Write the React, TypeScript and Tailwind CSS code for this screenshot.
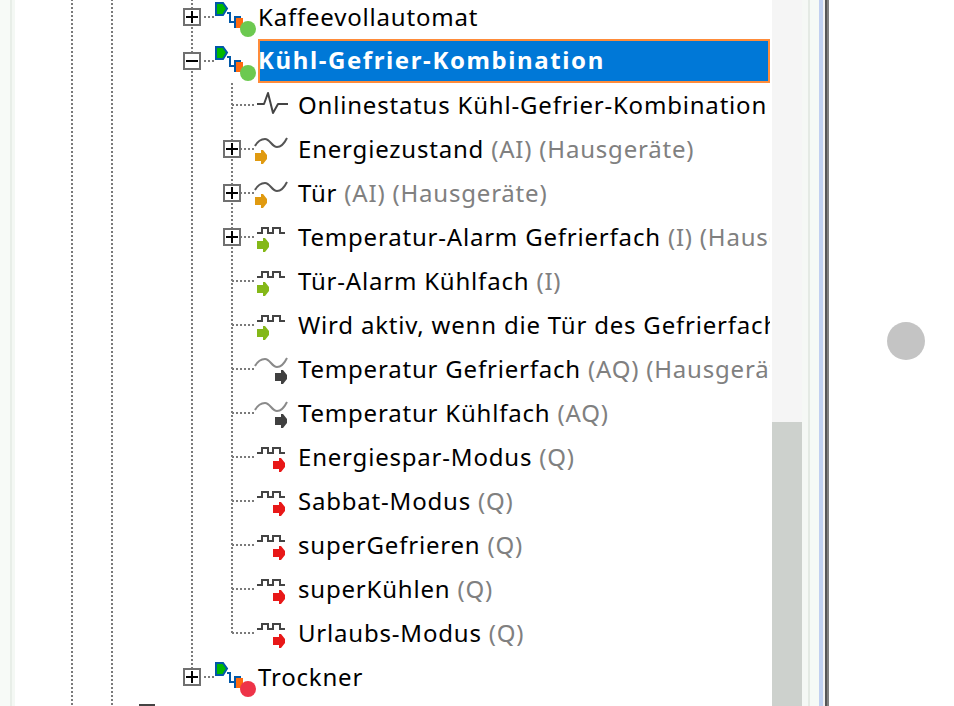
import React from 'react';

const dotsY = 'bg-[repeating-linear-gradient(to_bottom,#7a7a7a_0,#7a7a7a_2px,transparent_2px,transparent_4px)]';
const dotsX = 'bg-[repeating-linear-gradient(to_right,#7a7a7a_0,#7a7a7a_2px,transparent_2px,transparent_4px)]';

type Kind = 'pulse' | 'ai' | 'i' | 'aq' | 'q';

// Vertical guide of one tree level
function Guide({ on = true }: { on?: boolean }) {
  return (
    <div className="w-10 h-full shrink-0 flex justify-center">
      {on && <div className={`w-0.5 h-full ${dotsY}`}></div>}
    </div>
  );
}

function Toggle({ open }: { open?: boolean }) {
  return (
    <div className="absolute left-[11px] top-[13px] w-[18px] h-[18px] border-2 border-[#707070] bg-white flex items-center justify-center">
      <svg width="14" height="14" viewBox="0 0 14 14">
        <rect x="1" y="6" width="12" height="2" fill="#000" />
        {!open && <rect x="6" y="1" width="2" height="12" fill="#000" />}
      </svg>
    </div>
  );
}

function DeviceIcon({ dot }: { dot: string }) {
  return (
    <svg width="46" height="44" viewBox="0 0 46 44" className="shrink-0">
      <path d="M4 8 H11 L15 13.5 L11 20 H4 Z" fill="#00b800" stroke="#0058a8" strokeWidth="2" />
      <path d="M15 18 H18 V27 H22" fill="none" stroke="#0058a8" strokeWidth="2" />
      <rect x="24" y="23" width="7" height="10" fill="#ff6a10" />
      <path d="M23 33 V22 H29" fill="none" stroke="#0058a8" strokeWidth="2" />
      <circle cx="36" cy="34" r="8" fill={dot} />
    </svg>
  );
}

const sine = 'M3 19 Q7 12 13 12 C18 12 20 20 25 20 C30 20 33 15 35 11';
const square = 'M5 18 H10 V13 H16 V18 H21 V13 H28 V18 H33';

function Arrow({ x, y, color }: { x: number; y: number; color: string }) {
  return <path transform={`translate(${x} ${y})`} d="M0 3 H6 V0 H8 L12 5 V9 L8 14 H6 V11 H0 Z" fill={color} />;
}

function SignalIcon({ kind }: { kind: Kind }) {
  return (
    <svg width="46" height="44" viewBox="0 0 46 44" className="shrink-0">
      {kind === 'pulse' && (
        <path d="M5 21 H12 L16 10 L21 30 L26 21 H36" fill="none" stroke="#444" strokeWidth="2" strokeLinejoin="round" />
      )}
      {kind === 'ai' && (
        <>
          <path d={sine} fill="none" stroke="#555" strokeWidth="2" />
          <Arrow x={3} y={23} color="#e09a10" />
        </>
      )}
      {kind === 'i' && (
        <>
          <path d={square} fill="none" stroke="#444" strokeWidth="2" />
          <Arrow x={5} y={23} color="#84b818" />
        </>
      )}
      {kind === 'aq' && (
        <>
          <path d={sine} fill="none" stroke="#8a8a8a" strokeWidth="2" />
          <Arrow x={23} y={23} color="#404040" />
        </>
      )}
      {kind === 'q' && (
        <>
          <path d={square} fill="none" stroke="#444" strokeWidth="2" />
          <Arrow x={21} y={23} color="#e81818" />
        </>
      )}
    </svg>
  );
}

function DeviceRow({ name, dot, open, selected, last }: any) {
  return (
    <div className="flex h-11 shrink-0 items-center">
      <Guide />
      <Guide />
      <Guide on={false} />
      <div className="relative w-10 h-full shrink-0">
        <div className={`absolute left-[19px] top-0 w-0.5 ${last ? 'h-[14px]' : 'h-full'} ${dotsY}`}></div>
        <div className={`absolute left-[32px] top-[21px] w-[10px] h-0.5 ${dotsX}`}></div>
        <Toggle open={open} />
      </div>
      <DeviceIcon dot={dot} />
      {selected ? (
        <div className="w-[512px] h-11 shrink-0 bg-[#0078d7] border-2 border-[#ff8c3a] text-white font-bold tracking-[1.6px] indent-[-2px] leading-[38px] whitespace-nowrap overflow-hidden">
          {name}
        </div>
      ) : (
        <span className="text-black whitespace-nowrap">{name}</span>
      )}
    </div>
  );
}

function SignalRow({ name, extra, kind, toggle, last }: any) {
  return (
    <div className="flex h-11 shrink-0 items-center">
      <Guide />
      <Guide />
      <Guide on={false} />
      <Guide />
      <div className="relative w-10 h-full shrink-0">
        <div className={`absolute left-[19px] top-0 w-0.5 ${last ? 'h-[22px]' : 'h-full'} ${dotsY}`}></div>
        <div className={`absolute left-[20px] top-[21px] w-[22px] h-0.5 ${dotsX}`}></div>
        {toggle && <Toggle />}
      </div>
      <SignalIcon kind={kind} />
      <span className="text-black whitespace-nowrap">
        {name}
        {extra && <span className="text-[#808080]"> {extra}</span>}
      </span>
    </div>
  );
}

export default function App() {
  return (
    <div className="w-[954px] h-[706px] flex overflow-hidden bg-white font-['Noto_Sans',sans-serif] text-[24px] tracking-[0.8px]">
      {/* window edge */}
      <div className="w-[10px] bg-[#f7faf7] shrink-0"></div>
      <div className="w-0.5 bg-[#e8eee8] shrink-0"></div>
      <div className="w-[3px] bg-[#f4f8f4] shrink-0"></div>

      {/* tree */}
      <div className="w-[755px] h-[711px] shrink-0 overflow-hidden pl-[37px] -mt-[5px] flex flex-col">
        <DeviceRow name="Kaffeevollautomat" dot="#6cc950" />
        <DeviceRow name="Kühl-Gefrier-Kombination" dot="#6cc950" open selected />
        <SignalRow kind="pulse" name="Onlinestatus Kühl-Gefrier-Kombination (Hausgeräte)" />
        <SignalRow kind="ai" toggle name="Energiezustand" extra="(AI) (Hausgeräte)" />
        <SignalRow kind="ai" toggle name="Tür" extra="(AI) (Hausgeräte)" />
        <SignalRow kind="i" toggle name="Temperatur-Alarm Gefrierfach" extra="(I) (Hausgeräte)" />
        <SignalRow kind="i" name="Tür-Alarm Kühlfach" extra="(I)" />
        <SignalRow kind="i" name="Wird aktiv, wenn die Tür des Gefrierfaches offen ist" />
        <SignalRow kind="aq" name="Temperatur Gefrierfach" extra="(AQ) (Hausgeräte)" />
        <SignalRow kind="aq" name="Temperatur Kühlfach" extra="(AQ)" />
        <SignalRow kind="q" name="Energiespar-Modus" extra="(Q)" />
        <SignalRow kind="q" name="Sabbat-Modus" extra="(Q)" />
        <SignalRow kind="q" name="superGefrieren" extra="(Q)" />
        <SignalRow kind="q" name="superKühlen" extra="(Q)" />
        <SignalRow kind="q" name="Urlaubs-Modus" extra="(Q)" last />
        <DeviceRow name="Trockner" dot="#ee3348" last />
        <div className="flex h-11 shrink-0">
          <Guide />
          <Guide />
          <div className="ml-[7px] mt-[5px] w-4 h-0.5 bg-[#444]"></div>
        </div>
      </div>
      <div className="w-0.5 shrink-0"></div>

      {/* scrollbar */}
      <div className="w-[30px] h-full shrink-0 bg-[#f5f5f5] flex flex-col justify-end">
        <div className="h-[284px] bg-[#cdd1cd]"></div>
      </div>

      {/* window frame */}
      <div className="w-1.5 bg-[#f5f8f5] shrink-0"></div>
      <div className="w-0.5 bg-[#e4eae4] shrink-0"></div>
      <div className="w-[9px] bg-[#f5faf6] shrink-0"></div>
      <div className="w-1 bg-[#c0d0f0] shrink-0"></div>
      <div className="w-0.5 bg-[#f0f0f0] shrink-0"></div>
      <div className="w-0.5 bg-[#555] shrink-0"></div>
      <div className="w-0.5 bg-[#808080] shrink-0"></div>

      {/* right pane */}
      <div className="flex-1 h-full pt-[322px] pl-[58px]">
        <div className="w-[38px] h-[38px] rounded-full bg-[#c4c4c4]"></div>
      </div>
    </div>
  );
}
